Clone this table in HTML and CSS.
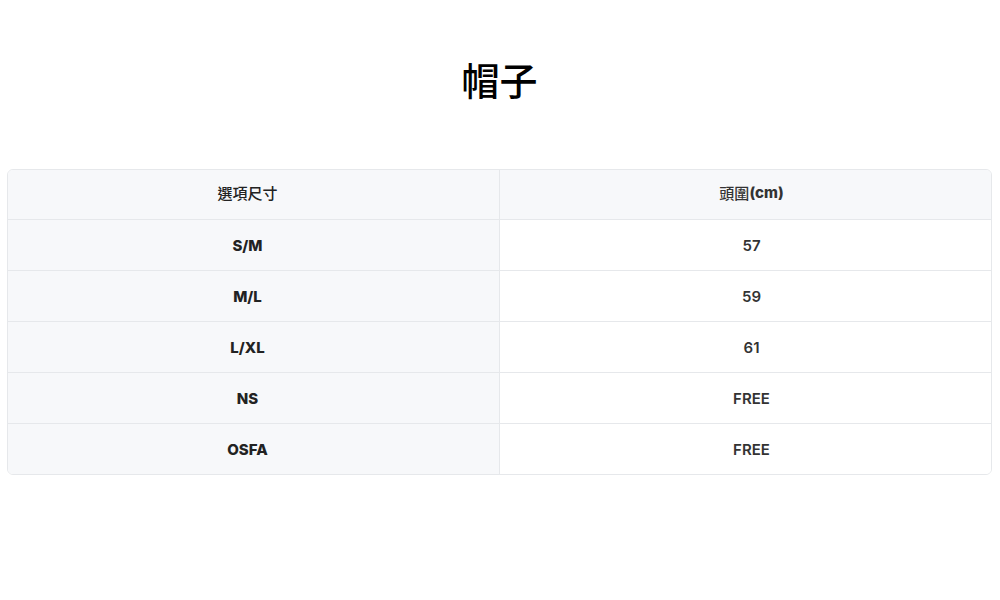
FILE: index.html
```html
<!DOCTYPE html>
<html lang="zh-Hant">
<head>
<meta charset="utf-8">
<link rel="stylesheet" href="styles.css">
</head>
<body>
<div class="page">
  <h1 class="title">帽子</h1>
  <div class="table">
    <div class="row head">
      <div class="cell first">選項尺寸</div>
      <div class="cell">頭圍<b>(cm)</b></div>
    </div>
    <div class="row">
      <div class="cell first">S/M</div>
      <div class="cell">57</div>
    </div>
    <div class="row">
      <div class="cell first">M/L</div>
      <div class="cell">59</div>
    </div>
    <div class="row">
      <div class="cell first">L/XL</div>
      <div class="cell">61</div>
    </div>
    <div class="row">
      <div class="cell first">NS</div>
      <div class="cell">FREE</div>
    </div>
    <div class="row">
      <div class="cell first">OSFA</div>
      <div class="cell">FREE</div>
    </div>
  </div>
</div>
</body>
</html>
```

FILE: styles.css
```css
html, body {
  margin: 0;
  padding: 0;
  background: #ffffff;
}
.page {
  padding: 0 8px 0 7px;
  font-family: Inter, "Noto Sans CJK TC", sans-serif;
  color: #333333;
}
.title {
  margin: 0;
  padding-top: 55px;
  height: 169px;
  box-sizing: border-box;
  text-align: center;
  font-family: "Noto Sans CJK TC", sans-serif;
  font-size: 38px;
  font-weight: 500;
  line-height: 48px;
  color: #000000;
}
.table {
  border: 1px solid #e6e8eb;
  border-radius: 6px;
  overflow: hidden;
}
.row {
  display: grid;
  grid-template-columns: 492px 1fr;
  height: 51px;
  border-top: 1px solid #e6e8eb;
  box-sizing: border-box;
}
.row:first-child {
  border-top: none;
  height: 49px;
}
.cell {
  display: flex;
  align-items: center;
  justify-content: center;
  padding-left: 12px;
  font-size: 15px;
  font-weight: 600;
  color: #333333;
  background: #ffffff;
}
.cell.first {
  padding-left: 0;
  padding-right: 12px;
  background: #f7f8fa;
  border-right: 1px solid #e6e8eb;
  font-weight: 800;
  color: #222222;
}
.head .cell {
  padding-bottom: 4px;
  background: #f7f8fa;
  font-family: "Noto Sans CJK TC", sans-serif;
  font-weight: 500;
  font-size: 15px;
}
.head b {
  font-family: Inter, sans-serif;
  font-weight: 800;
}
```
